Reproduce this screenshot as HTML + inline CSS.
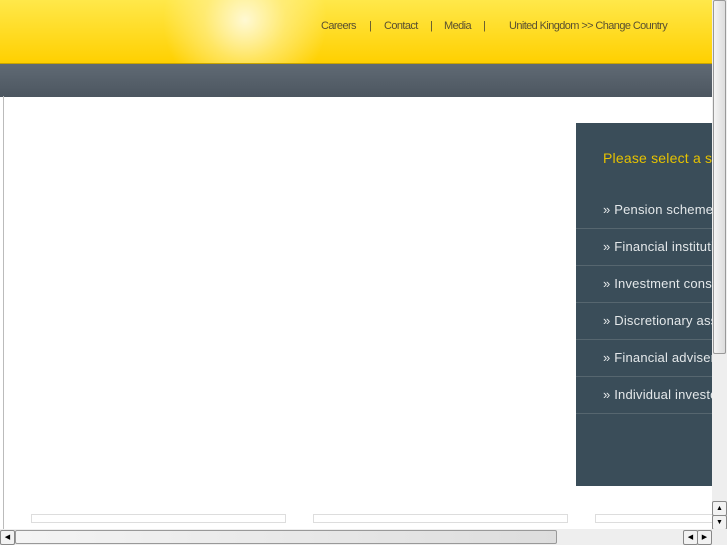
<!DOCTYPE html><html><head><style>
body{margin:0;width:727px;height:545px;overflow:hidden;position:relative;background:#fff;font-family:"Liberation Sans",sans-serif}
.hd{position:absolute;left:0;top:0;width:712px;height:63px;background:linear-gradient(#ffe84a,#ffd000);}
.sun{position:absolute;left:160px;top:-60px;width:170px;height:160px;background:radial-gradient(circle,rgba(255,250,220,.95) 0%,rgba(255,240,150,.6) 35%,rgba(255,230,60,0) 70%)}
.nav{position:absolute;top:20px;font-size:11px;color:#5a5030;letter-spacing:-.6px}
.bar{position:absolute;left:0;top:63px;width:712px;height:33px;background:linear-gradient(#606a74,#4c5660);border-top:1px solid #c9a400}
.side{position:absolute;left:3px;top:96px;width:1px;height:433px;background:#bbb}
.panel{position:absolute;left:576px;top:123px;width:136px;height:363px;background:#3a4d59;overflow:hidden;white-space:nowrap}
.panel h{position:absolute;left:27px;top:27px;color:#e6c200;font-size:14px;letter-spacing:.2px}
.it{position:absolute;left:0;width:136px;height:37px;border-bottom:1px solid #56666f;color:#e4e8ea;font-size:13px;letter-spacing:.2px}
.it span{position:absolute;left:27px;top:11px}
.box{position:absolute;top:514px;height:7px;border:1px solid #ddd}
.vs{position:absolute;left:712px;top:0;width:15px;height:529px;background:#eee}
.hs{position:absolute;left:0;top:529px;width:727px;height:16px;background:#eee}
.th{position:absolute;background:linear-gradient(90deg,#f4f4f4,#ddd);border:1px solid #999;border-radius:2px}
.btn{position:absolute;width:13px;height:13px;background:#f2f2f2;border:1px solid #888;border-radius:2px;font-size:7px;text-align:center;line-height:13px;color:#000}
</style></head><body>
<div class="hd"><div class="sun"></div></div>
<div class="nav" style="left:321px">Careers</div>
<div class="nav" style="left:369px">|</div>
<div class="nav" style="left:384px">Contact</div>
<div class="nav" style="left:430px">|</div>
<div class="nav" style="left:444px">Media</div>
<div class="nav" style="left:483px">|</div>
<div class="nav" style="left:509px">United Kingdom &gt;&gt; Change Country</div>
<div class="bar"></div>
<div class="side"></div>
<div class="panel"><h>Please select a sector</h>
<div class="it" style="top:68px"><span>» Pension schemes</span></div>
<div class="it" style="top:105px"><span>» Financial institutions</span></div>
<div class="it" style="top:142px"><span>» Investment consultants</span></div>
<div class="it" style="top:179px"><span>» Discretionary asset</span></div>
<div class="it" style="top:216px"><span>» Financial advisers</span></div>
<div class="it" style="top:253px"><span>» Individual investors</span></div>
</div>
<div class="box" style="left:31px;width:253px"></div>
<div class="box" style="left:313px;width:253px"></div>
<div class="box" style="left:595px;width:130px"></div>
<div class="vs"><div class="th" style="left:1px;top:0;width:11px;height:352px"></div>
<div class="btn" style="left:0;top:501px">▲</div><div class="btn" style="left:0;top:515px">▼</div></div>
<div class="hs"><div class="btn" style="left:0;top:1px">◀</div>
<div class="th" style="left:15px;top:1px;width:540px;height:12px"></div>
<div class="btn" style="left:683px;top:1px">◀</div><div class="btn" style="left:697px;top:1px">▶</div></div>
</body></html>
